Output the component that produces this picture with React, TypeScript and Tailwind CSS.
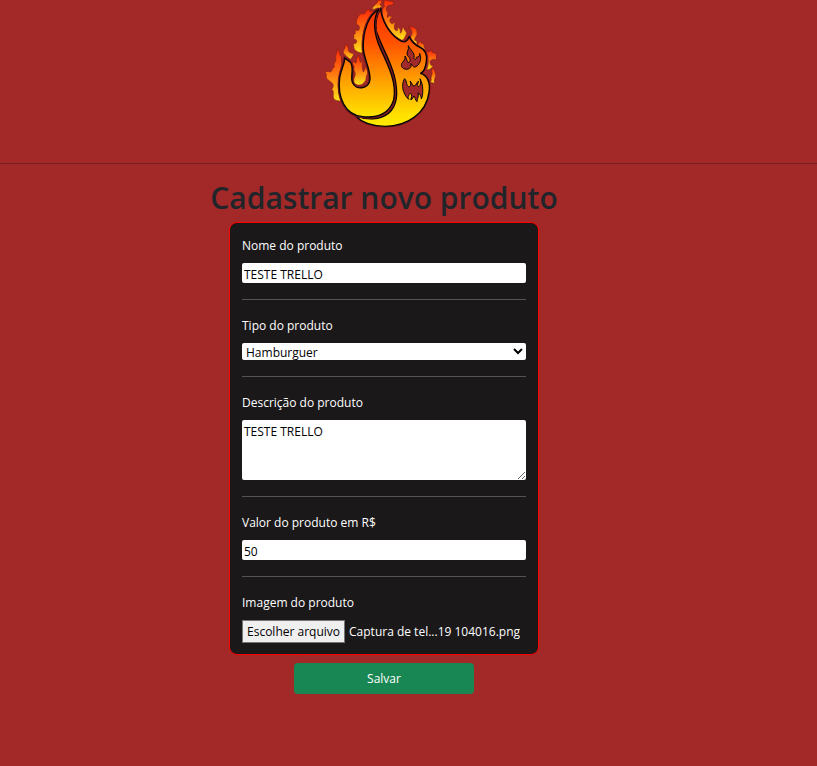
import { useState } from "react";
import type { ReactNode } from "react";

const bodyPath =
  "M212 25C214 62 239 102 266 119Q277 127 286 125Q294 121 298 110C304 127 317 136 331 143C348 151 352 164 349 184C347 202 341 215 332 220C353 228 361 250 357 277C349 339 292 379 226 379C188 378 156 368 136 347C169 361 211 361 236 340C264 316 265 276 253 228C240 177 211 134 199 92Q193 57 212 25Z";
const hookPath =
  "M206 28C174 45 158 98 160 146C162 177 182 209 180 238C178 268 136 273 127 247C121 228 132 208 123 190C119 181 110 181 104 174C105 190 93 208 89 234C82 293 105 345 158 350C206 356 240 337 251 299C261 252 237 201 213 150C194 108 184 64 206 28Z";

function FlameLogo() {
  return (
    <svg viewBox="12 0 420 405" className="h-[135px] w-[140px]" role="img" aria-label="JB">
      <defs>
        <linearGradient id="body" gradientUnits="userSpaceOnUse" x1="0" y1="20" x2="0" y2="380">
          <stop offset="0" stopColor="#ff3000" />
          <stop offset="0.3" stopColor="#ff5200" />
          <stop offset="0.6" stopColor="#ff9c00" />
          <stop offset="0.9" stopColor="#ffe000" />
          <stop offset="1" stopColor="#ffec00" />
        </linearGradient>
        <linearGradient id="flame" x1="0" y1="0" x2="0" y2="1">
          <stop offset="0" stopColor="#ff2a08" />
          <stop offset="0.5" stopColor="#ff7a10" />
          <stop offset="1" stopColor="#ffe21a" />
        </linearGradient>
      </defs>
      <g fill="url(#flame)" stroke="#7a1a10" strokeWidth="1.5" strokeLinejoin="round">
        <path d="M188 29C187 18 196 17 198 10C202 11 203 7 202 1L214 0C218 6 214 11 209 14C215 15 216 20 214 27L202 24Z" />
        <path d="M218 52C214 35 217 26 224 19C220 13 220 5 226 0L250 6C252 12 248 16 240 15C229 17 226 25 231 33C237 40 230 45 232 53C236 47 244 47 246 52C238 57 237 65 244 70C248 75 249 66 256 68C252 76 251 86 257 91C264 95 264 87 261 82C270 84 273 92 270 100C278 98 273 86 281 82C282 91 287 92 290 99C286 110 282 119 276 121C252 111 230 86 218 52Z" />
        <path d="M301 114C305 104 309 99 304 91C303 86 300 83 294 82C308 77 320 84 321 96C324 108 313 112 314 121C319 121 322 125 321 134Q310 126 301 114Z" />
        <path d="M324 137C322 131 326 127 331 124C334 130 338 132 344 134C340 137 341 142 346 147L341 151Z" />
        <path d="M349 155C356 155 362 155 367 151C365 157 367 160 376 159C382 165 376 174 380 182C371 175 364 178 360 185C360 192 362 198 370 197C365 205 357 210 350 209C357 193 356 170 349 155Z" />
        <path d="M364 240C361 229 368 224 366 216C363 211 366 208 371 203C372 212 379 220 377 229C375 236 371 240 374 250L361 247Z" />
        <path d="M195 33C187 30 184 35 177 34C180 31 183 30 184 29C173 27 166 33 164 42C155 38 145 45 143 54C137 60 141 71 139 75C147 73 149 79 148 87C147 93 139 92 135 89C138 96 136 104 130 105C134 110 131 116 130 119C136 116 141 119 140 126C138 132 132 132 128 129C134 135 129 145 136 151C143 157 150 158 157 159C153 110 165 61 195 33Z" />
        <path d="M123 178C126 169 132 169 130 160C122 160 114 156 115 147C115 140 110 135 105 131C108 142 102 148 100 154C99 160 104 163 108 167C112 171 116 174 123 178Z" />
        <path d="M94 197C96 187 91 176 95 171C86 166 91 154 82 145C84 160 75 163 77 174C80 181 74 187 72 193C75 201 70 207 66 205C68 211 64 218 56 215C52 213 48 215 45 218C52 219 47 229 50 235C54 240 61 244 67 250C73 256 68 266 65 268C73 273 69 284 70 291C71 300 80 303 93 303C84 276 85 238 94 197Z" />
        <path d="M132 248C128 235 139 228 135 217C130 212 133 204 132 199C126 195 126 187 130 184C134 190 139 191 140 184C137 176 141 171 148 166C147 176 149 183 153 188C155 179 160 183 157 191C155 203 159 210 160 216C165 210 165 204 168 198C170 210 176 216 171 224C166 231 171 242 162 247C158 257 140 258 132 248Z" />
      </g>
      <g strokeLinejoin="round">
        <path d={bodyPath} fill="url(#body)" stroke="#721b20" strokeWidth="7" />
        <path d={bodyPath} fill="url(#body)" stroke="#050505" strokeWidth="4" />
        <path d={hookPath} fill="url(#body)" stroke="#761b20" strokeWidth="10" />
        <path d={hookPath} fill="url(#body)" stroke="#050505" strokeWidth="4" />
      </g>
      <g fill="#a22929" stroke="#080808" strokeWidth="3" strokeLinejoin="round">
        <path d="M295 137C300 150 315 157 312 172C311 179 319 182 319 172C326 172 331 165 329 160C335 175 331 190 321 198C312 206 307 197 303 191C306 205 294 210 284 207C275 205 271 194 277 188C281 181 287 180 285 168C290 174 290 183 294 188C305 184 300 174 292 166C288 157 298 150 295 137Z" />
        <path d="M284 236C277 245 276 262 281 275C285 287 291 293 296 298C292 290 296 285 302 279C307 285 304 294 302 299C309 298 308 292 312 288C316 293 315 299 321 305C320 296 328 292 324 278C331 283 334 290 334 297C340 285 341 255 330 236C334 250 332 258 325 260C320 256 324 249 326 244C318 247 320 257 312 258C305 257 307 248 300 243C304 252 302 261 296 260C287 257 293 246 284 236Z" />
      </g>
    </svg>
  );
}

const labelText = "block h-5 text-[12px] leading-[22px] font-medium text-white";
const control = "block w-full rounded-xs bg-white px-0.5 text-[12px] text-black";

function Field({ id, label, last, children }: { id: string; label: string; last?: boolean; children: ReactNode }) {
  return (
    <>
      <div className="flex flex-col gap-2">
        <label htmlFor={id} className={labelText}>{label}</label>
        {children}
      </div>
      {!last && <hr className="mt-4 mb-[15px] border-[#555354]" />}
    </>
  );
}

export default function App() {
  const [fileName, setFileName] = useState("Captura de tel...19 104016.png");

  return (
    <div className="min-h-screen bg-[#a32929] font-['Open_Sans','Noto_Sans',sans-serif]">
      <header className="border-b border-[#7a1f1f] pb-7">
        <div className="flex w-full max-w-3xl justify-center">
          <FlameLogo />
        </div>
      </header>
      <main className="flex w-full max-w-3xl flex-col items-center pt-[14px]">
        <h1 className="mb-1 text-[30px] leading-10 font-semibold text-[#212529]">Cadastrar novo produto</h1>
        <form className="flex flex-col items-center gap-2" onSubmit={(e) => e.preventDefault()}>
          <div className="w-[310px] rounded-lg border border-[#ff0000] bg-[#1b1819] px-3 pt-3 pb-[11px]">
            <Field id="nome" label="Nome do produto">
              <input id="nome" type="text" defaultValue="TESTE TRELLO" className={`${control} h-5 pt-0.5`} />
            </Field>
            <Field id="tipo" label="Tipo do produto">
              <select id="tipo" className="block h-[17px] w-full rounded-xs bg-white text-[12px] leading-4 text-black">
                <option>Hamburguer</option>
                <option>Bebida</option>
              </select>
            </Field>
            <Field id="descricao" label="Descrição do produto">
              <textarea id="descricao" defaultValue="TESTE TRELLO" className={`${control} h-[60px] py-0.5 leading-5`} />
            </Field>
            <Field id="valor" label="Valor do produto em R$">
              <input id="valor" type="number" defaultValue="50" className={`${control} h-5 pt-0.5`} />
            </Field>
            <Field id="imagem" label="Imagem do produto" last>
              <div className="relative flex items-center gap-1">
                <input
                  id="imagem"
                  type="file"
                  className="sr-only"
                  onChange={(e) => setFileName(e.target.files?.[0]?.name ?? "")}
                />
                <label htmlFor="imagem" className="h-[23px] shrink-0 border border-[#767676] bg-[#efefef] px-1 text-[12px] leading-[22px] text-black">
                  Escolher arquivo
                </label>
                <span className="truncate text-[12px] leading-[22px] font-medium text-white">{fileName}</span>
              </div>
            </Field>
          </div>
          <button type="submit" className="h-[31px] w-[180px] rounded-sm bg-[#198754] text-[12px] font-medium text-white">Salvar</button>
        </form>
      </main>
    </div>
  );
}
